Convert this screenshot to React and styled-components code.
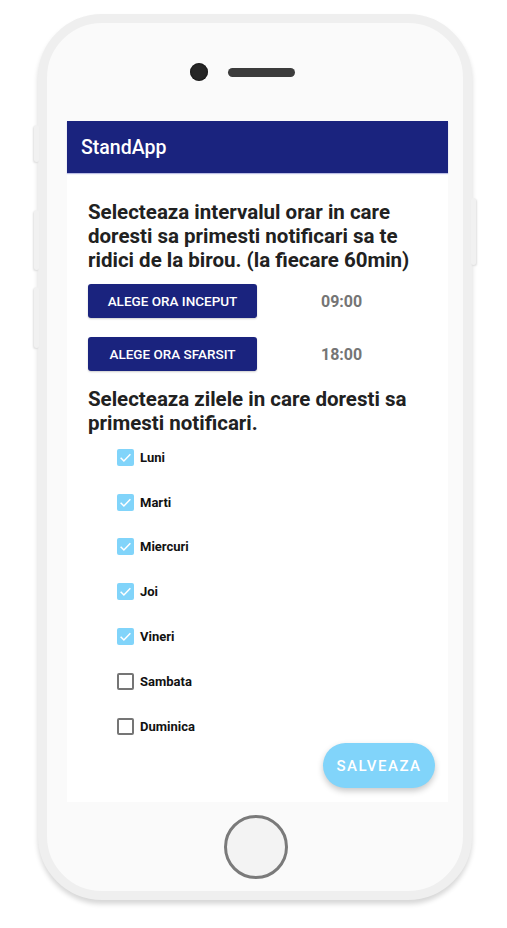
import React from 'react';
import styled, { createGlobalStyle } from 'styled-components';

const GlobalStyle = createGlobalStyle`
  html, body {
    margin: 0;
    padding: 0;
    background: #ffffff;
  }
  body {
    font-family: Roboto, 'Noto Sans', Arial, sans-serif;
  }
`;

const Page = styled.div`
  width: 507px;
  height: 928px;
  padding: 14px 0 0 38px;
  box-sizing: border-box;
`;

const Phone = styled.div`
  position: relative;
  width: 434px;
  height: 886px;
  box-sizing: border-box;
  border: 9px solid #efefef;
  border-radius: 64px;
  background: #fafafa;
  box-shadow: 0 4px 5px rgba(0, 0, 0, 0.16);
  display: flex;
  flex-direction: column;
`;

const SideKey = styled.div`
  position: absolute;
  width: 5px;
  top: ${p => p.top}px;
  height: ${p => p.h}px;
  ${p => (p.right ? 'right: -13px;' : 'left: -13px;')}
  background: #f1f1f1;
  border-radius: 3px;
  box-shadow: ${p => (p.right ? '1px' : '-1px')} 1px 2px rgba(0, 0, 0, 0.12);
`;

const Top = styled.div`
  height: 98px;
  display: flex;
  align-items: center;
  padding-left: 143px;
  gap: 20px;
`;

const Camera = styled.div`
  width: 18px;
  height: 18px;
  border-radius: 50%;
  background: #262626;
  box-shadow: inset 0 0 2px #000;
`;

const Speaker = styled.div`
  width: 67px;
  height: 9px;
  border-radius: 5px;
  background: #3c3c3c;
`;

const Screen = styled.div`
  position: relative;
  width: 381px;
  height: 681px;
  margin-left: 20px;
  background: #ffffff;
  display: flex;
  flex-direction: column;
`;

const AppBar = styled.div`
  height: 52px;
  flex-shrink: 0;
  background: #1a237e;
  display: flex;
  align-items: center;
  padding-left: 14px;
  color: #ffffff;
  font-size: 19.5px;
  font-weight: 500;
  box-shadow: 0 1px 1px rgba(60, 70, 180, 0.35);
`;

const Content = styled.div`
  padding: 27px 21px 0 21px;
  display: flex;
  flex-direction: column;
`;

const Heading = styled.h2`
  margin: 0;
  margin-top: ${p => p.mt || 0}px;
  font-size: 20.5px;
  line-height: 24px;
  font-weight: 700;
  color: #212121;
`;

const TimeRow = styled.div`
  display: flex;
  align-items: center;
  margin-top: ${p => p.mt}px;
`;

const PickButton = styled.button`
  width: 169px;
  height: 34px;
  border: none;
  border-radius: 3px;
  background: #1a237e;
  color: #ffffff;
  font-family: Roboto, sans-serif;
  font-size: 13.5px;
  font-weight: 500;
  text-transform: uppercase;
  box-shadow: 0 1px 2px rgba(0, 0, 0, 0.2);
  padding: 0;
`;

const TimeText = styled.span`
  margin-left: 64px;
  font-size: 16px;
  font-weight: 700;
  color: #757575;
`;

const DayList = styled.div`
  display: flex;
  flex-direction: column;
  padding-left: 29px;
`;

const DayRow = styled.label`
  height: 44.8px;
  display: flex;
  align-items: center;
  gap: 6px;
`;

const Box = styled.span`
  width: 17px;
  height: 17px;
  box-sizing: border-box;
  border-radius: 2px;
  display: flex;
  align-items: center;
  justify-content: center;
  background: ${p => (p.checked ? '#81d4fa' : 'transparent')};
  border: ${p => (p.checked ? 'none' : '2px solid #757575')};
`;

const DayLabel = styled.span`
  font-size: 13px;
  font-weight: 700;
  color: #111111;
`;

const SaveButton = styled.button`
  position: absolute;
  right: 13px;
  bottom: 14px;
  width: 112px;
  height: 45px;
  border: none;
  border-radius: 23px;
  background: #81d4fa;
  color: #ffffff;
  font-family: Roboto, sans-serif;
  font-size: 15px;
  font-weight: 500;
  letter-spacing: 1.5px;
  box-shadow: 0 3px 6px rgba(0, 0, 0, 0.22);
  padding: 0;
`;

const Bottom = styled.div`
  flex: 1;
  display: flex;
  align-items: center;
  justify-content: center;
`;

const HomeButton = styled.div`
  width: 64px;
  height: 64px;
  box-sizing: border-box;
  border-radius: 50%;
  border: 3px solid #7a7a7a;
  background: #f3f3f3;
  margin-left: 1px;
`;

const Check = () => (
  <svg width="13" height="13" viewBox="0 0 24 24">
    <path d="M3 12.5l6 6L21 6" fill="none" stroke="#fff" strokeWidth="2.8" />
  </svg>
);

const days = [
  { name: 'Luni', on: true },
  { name: 'Marti', on: true },
  { name: 'Miercuri', on: true },
  { name: 'Joi', on: true },
  { name: 'Vineri', on: true },
  { name: 'Sambata', on: false },
  { name: 'Duminica', on: false },
];

export default function App() {
  return (
    <>
      <GlobalStyle />
      <Page>
        <Phone>
          <SideKey top={102} h={37} />
          <SideKey top={187} h={60} />
          <SideKey top={264} h={61} />
          <SideKey right top={175} h={67} />
          <Top>
            <Camera />
            <Speaker />
          </Top>
          <Screen>
            <AppBar>StandApp</AppBar>
            <Content>
              <Heading>
                Selecteaza intervalul orar in care doresti sa primesti notificari sa te ridici de la birou. (la fiecare 60min)
              </Heading>
              <TimeRow mt={12}>
                <PickButton>Alege ora inceput</PickButton>
                <TimeText>09:00</TimeText>
              </TimeRow>
              <TimeRow mt={19}>
                <PickButton>Alege ora sfarsit</PickButton>
                <TimeText>18:00</TimeText>
              </TimeRow>
              <Heading mt={16}>
                Selecteaza zilele in care doresti sa primesti notificari.
              </Heading>
              <DayList>
                {days.map(d => (
                  <DayRow key={d.name}>
                    <Box checked={d.on}>{d.on && <Check />}</Box>
                    <DayLabel>{d.name}</DayLabel>
                  </DayRow>
                ))}
              </DayList>
            </Content>
            <SaveButton>SALVEAZA</SaveButton>
          </Screen>
          <Bottom>
            <HomeButton />
          </Bottom>
        </Phone>
      </Page>
    </>
  );
}
